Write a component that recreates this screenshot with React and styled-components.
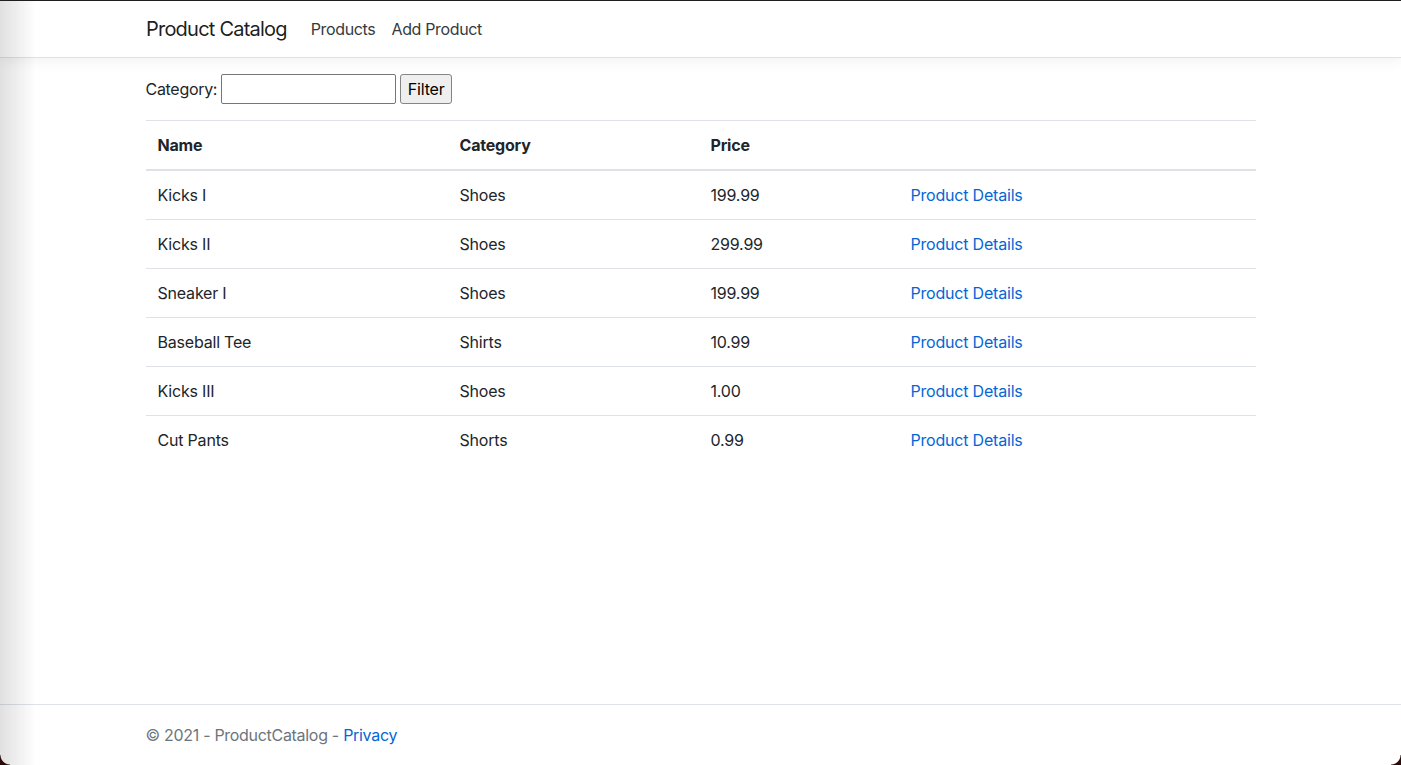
import React from "react";
import styled, { createGlobalStyle } from "styled-components";

const products = [
  { name: "Kicks I", category: "Shoes", price: "199.99" },
  { name: "Kicks II", category: "Shoes", price: "299.99" },
  { name: "Sneaker I", category: "Shoes", price: "199.99" },
  { name: "Baseball Tee", category: "Shirts", price: "10.99" },
  { name: "Kicks III", category: "Shoes", price: "1.00" },
  { name: "Cut Pants", category: "Shorts", price: "0.99" },
];

export default function App() {
  return (
    <>
      <GlobalStyle />
      <Page>
        <Navbar>
          <Container className="nav">
            <Brand href="#">Product Catalog</Brand>
            <NavLink href="#">Products</NavLink>
            <NavLink href="#">Add Product</NavLink>
          </Container>
        </Navbar>

        <Main>
          <Container>
            <FilterForm onSubmit={(e) => e.preventDefault()}>
              <Label htmlFor="category">Category:</Label>
              <Input id="category" type="text" />
              <Button type="submit">Filter</Button>
            </FilterForm>

            <Table>
              <thead>
                <tr>
                  <Th $w={302}>Name</Th>
                  <Th $w={251}>Category</Th>
                  <Th $w={200}>Price</Th>
                  <Th></Th>
                </tr>
              </thead>
              <tbody>
                {products.map((p) => (
                  <tr key={p.name}>
                    <Td>{p.name}</Td>
                    <Td>{p.category}</Td>
                    <Td>{p.price}</Td>
                    <Td>
                      <A href="#">Product Details</A>
                    </Td>
                  </tr>
                ))}
              </tbody>
            </Table>
          </Container>
        </Main>

        <Footer>
          <Container>
            © 2021 - ProductCatalog - <A href="#">Privacy</A>
          </Container>
        </Footer>
      </Page>

      {/* window chrome from the screenshot */}
      <Chrome>
        <TopLine />
        <LeftShade />
        <Corner $side="left" />
        <Corner $side="right" />
      </Chrome>
    </>
  );
}

const GlobalStyle = createGlobalStyle`
  html, body {
    margin: 0;
    padding: 0;
    background: #fff;
  }
  body {
    font-family: Inter, "Liberation Sans", Arial, sans-serif;
    font-size: 16px;
    line-height: 1.5;
    letter-spacing: -0.2px;
    color: #212529;
  }
  * { box-sizing: border-box; }
`;

const Page = styled.div`
  min-height: 100vh;
  display: flex;
  flex-direction: column;
`;

const Container = styled.div`
  width: 100%;
  max-width: 1140px;
  margin: 0 auto;
  padding: 0 15px;

  &.nav {
    display: flex;
    align-items: center;
  }
`;

const Navbar = styled.nav`
  background: #fff;
  border-bottom: 1px solid #dee2e6;
  box-shadow: 0 4px 12px rgba(0, 0, 0, 0.05);
  padding: 9px 16px 8px;
  margin-bottom: 15px;
  position: relative;

  ${Container} {
    padding: 0 15px 0 15.5px;
  }
`;

const Brand = styled.a`
  font-size: 20px;
  line-height: 30px;
  letter-spacing: -0.78px;
  padding: 5px 0;
  margin-right: 16px;
  color: rgba(0, 0, 0, 0.9);
  text-decoration: none;
  white-space: nowrap;
`;

const NavLink = styled.a`
  padding: 8px;
  color: #343a40;
  text-decoration: none;
  letter-spacing: -0.35px;
`;

const Main = styled.main`
  flex: 1;
`;

const FilterForm = styled.form`
  display: flex;
  align-items: center;
  gap: 4px;
  margin: 0 0 16px;
  padding-top: 1px;
`;

const Label = styled.label`
  letter-spacing: -0.3px;
`;

const Input = styled.input`
  font: inherit;
  width: 175px;
  height: 30px;
  margin: 0;
  padding: 1px 2px;
  border: 1px solid #767676;
  border-radius: 2px;
  background: #fff;
`;

const Button = styled.button`
  font: inherit;
  letter-spacing: inherit;
  width: 52px;
  height: 30px;
  margin: 0;
  padding: 1px 6px;
  border: 1px solid #858585;
  border-radius: 3px;
  background: #efefef;
  color: #000;
`;

const Table = styled.table`
  width: 100%;
  border-collapse: collapse;
  margin-bottom: 16px;
`;

const Th = styled.th`
  text-align: left;
  font-weight: 700;
  padding: 12px;
  border-top: 1px solid #dee2e6;
  border-bottom: 2px solid #dee2e6;
  width: ${(p) => (p.$w ? `${p.$w}px` : "auto")};
  vertical-align: bottom;
`;

const Td = styled.td`
  padding: 12px;
  border-top: 1px solid #dee2e6;
  vertical-align: top;
`;

const A = styled.a`
  color: #0366d6;
  text-decoration: none;
`;

const Footer = styled.footer`
  border-top: 1px solid #dee2e6;
  color: #6c757d;
  line-height: 60px;
  white-space: nowrap;
  letter-spacing: -0.3px;
`;

const Chrome = styled.div`
  position: fixed;
  inset: 0;
  pointer-events: none;
`;

const TopLine = styled.div`
  position: absolute;
  top: 0;
  left: 0;
  right: 0;
  height: 1px;
  background: #1e1e1e;
`;

const LeftShade = styled.div`
  position: absolute;
  top: 1px;
  bottom: 0;
  left: 0;
  width: 36px;
  background: linear-gradient(to right, rgba(0, 0, 0, 0.12), rgba(0, 0, 0, 0));
`;

const Corner = styled.div`
  position: absolute;
  bottom: 0;
  width: 10px;
  height: 10px;
  ${(p) => (p.$side === "left" ? "left: 0;" : "right: 0;")}
  background: ${(p) =>
    p.$side === "left"
      ? "radial-gradient(circle at 100% 0, transparent 9px, #2b0a0a 10px)"
      : "radial-gradient(circle at 0 0, transparent 9px, #2b0a0a 10px)"};
`;
